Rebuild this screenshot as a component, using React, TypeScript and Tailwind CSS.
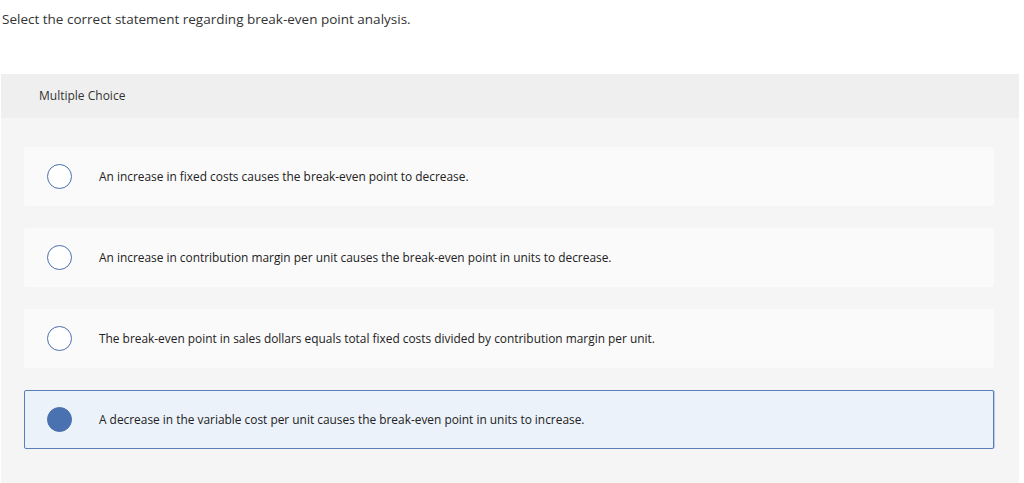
const OPTIONS = [
  "An increase in fixed costs causes the break-even point to decrease.",
  "An increase in contribution margin per unit causes the break-even point in units to decrease.",
  "The break-even point in sales dollars equals total fixed costs divided by contribution margin per unit.",
  "A decrease in the variable cost per unit causes the break-even point in units to increase.",
];

const SELECTED = 3;

export default function App() {
  return (
    <div className="min-h-screen bg-white font-['Open_Sans',sans-serif] text-[#333]">
      <p className="pl-[2px] pt-[9px] text-[13.5px] leading-[20px]">
        Select the correct statement regarding break-even point analysis.
      </p>

      <div className="ml-[1px] mr-[5px] mt-[45px] bg-[#f5f5f5] pb-[40px]">
        <div className="flex h-[44px] items-center bg-[#efefef] pl-[38px] text-[12px]">
          Multiple Choice
        </div>

        <div className="flex flex-col gap-[22px] pl-[23px] pr-[25px] pt-[29px]">
          {OPTIONS.map((text, i) => {
            const selected = i === SELECTED;
            return (
              <div
                key={i}
                className={`flex h-[59px] items-center gap-[27px] rounded-[2px] border pl-[22px] ${
                  selected
                    ? "border-[#5a7fbd] bg-[#ebf2fa] shadow-[1px_0_0_#b8cbe6]"
                    : "border-transparent bg-[#fafafa]"
                }`}
              >
                <span
                  className={`h-[25px] w-[25px] shrink-0 rounded-full border-[1.5px] border-[#4a70ad] ${
                    selected ? "bg-[#4a72b0]" : "bg-white"
                  }`}
                />
                <span className="pt-[1px] text-[11.9px] text-[#222]">{text}</span>
              </div>
            );
          })}
        </div>
      </div>
    </div>
  );
}
